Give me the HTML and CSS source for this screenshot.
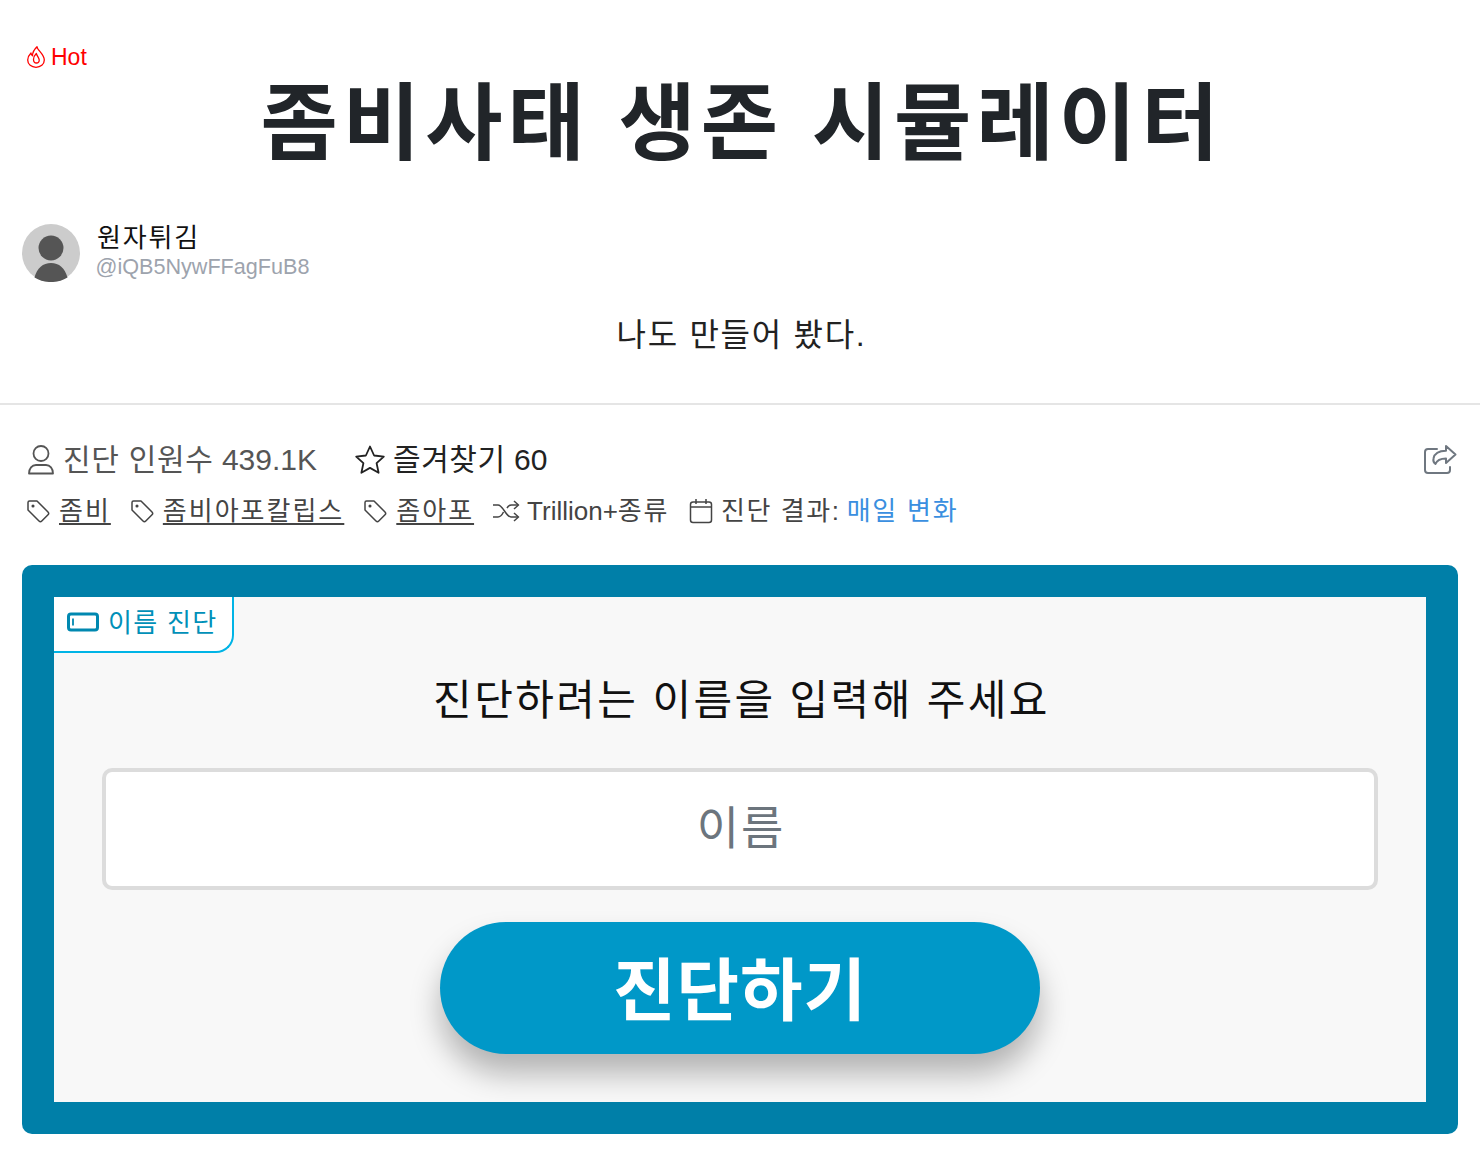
FILE: index.html
```html
<!DOCTYPE html>
<html lang="ko">
<head>
<meta charset="utf-8">
<title>좀비사태 생존 시뮬레이터</title>
<link rel="stylesheet" href="styles.css">
</head>
<body>
<header class="head">
  <div class="hot">
    <svg class="hot-icon" viewBox="0 0 18 22" fill="none" stroke="currentColor" stroke-width="1.300" stroke-linejoin="round"><path d="M10 .7C10 4 17.300 8 17.300 14c0 4.500-3.800 7.300-8.300 7.300S.7 18.500.7 14C.7 11 2.200 8.800 4 7c.2 1.400.6 2.200 1.500 2.800C5.500 6 7.500 3 10 .7z"/><path d="M9.300 7.500C7.200 9.500 6.500 11.500 6.500 13.500 6.500 15.500 7.600 17 9.500 17c1.800 0 2.900-1.500 2.700-3.200C12 11.800 10 10 9.300 7.500z"/></svg>
    <span>Hot</span>
  </div>
  <h1 class="title">좀비사태 생존 시뮬레이터</h1>
  <div class="author">
    <svg class="avatar" viewBox="0 0 58 58"><circle cx="29" cy="29" r="29" fill="#ccc"/><circle cx="29" cy="24" r="12.500" fill="#555"/><path d="M12.500 53.500C15 44 21 39 29 39s14 5 16.500 14.500A29 29 0 0 1 29 58a29 29 0 0 1-16.500-4.500z" fill="#555"/></svg>
    <div class="author-text">
      <div class="author-name">원자튀김</div>
      <div class="author-id">@iQB5NywFFagFuB8</div>
    </div>
  </div>
  <p class="desc">나도 만들어 봤다.</p>
</header>
<section class="meta">
  <div class="meta-row">
    <div class="stats">
      <span class="stat stat-people">
        <svg class="icon-lg" viewBox="0 0 28 32" fill="none" stroke="currentColor" stroke-width="1.800"><circle cx="14" cy="9.500" r="7.500"/><path d="M2 29.500c0-5 3-8.500 7-8.500h10c4 0 7 3.500 7 8.500z" stroke-linejoin="round"/></svg>
        <span><span class="ko">진단 인원수</span> 439.1K</span>
      </span>
      <span class="stat stat-fav">
        <svg class="icon-star" viewBox="0 0 32 32" fill="none" stroke="currentColor" stroke-width="1.800" stroke-linejoin="round"><path d="M16 2.500l4.100 9 9.700 1.100-7.200 6.600 2 9.600-8.600-4.900-8.600 4.900 2-9.600-7.200-6.600 9.700-1.100z"/></svg>
        <span><span class="ko">즐겨찾기</span> 60</span>
      </span>
    </div>
    <svg class="share" viewBox="0 0 34 32" fill="none" stroke="currentColor" stroke-width="2" stroke-linejoin="round" stroke-linecap="round"><path d="M14 5H5a3 3 0 0 0-3 3v18a3 3 0 0 0 3 3h19a3 3 0 0 0 3-3v-3"/><path d="M23 2l9.500 8.500L23 19v-4.500c-6 0-9 1.500-10.500 5.500-2-1.500-2.500-3.500-2-5.500C11.500 9.500 16 6.800 23 6.800z"/></svg>
  </div>
  <div class="tags">
    <a class="tag" href="#"><svg class="icon" viewBox="0 0 24 24" fill="none" stroke="currentColor" stroke-width="1.500" stroke-linejoin="round"><path d="M2 3.500A1.500 1.500 0 0 1 3.500 2h7.500l11 11a2 2 0 0 1 0 2.800L15.800 22a2 2 0 0 1-2.800 0L2 11z"/><circle cx="7" cy="7" r=".8" fill="currentColor"/></svg><span class="tag-link">좀비</span></a>
    <a class="tag" href="#"><svg class="icon" viewBox="0 0 24 24" fill="none" stroke="currentColor" stroke-width="1.500" stroke-linejoin="round"><path d="M2 3.500A1.500 1.500 0 0 1 3.500 2h7.500l11 11a2 2 0 0 1 0 2.800L15.800 22a2 2 0 0 1-2.800 0L2 11z"/><circle cx="7" cy="7" r=".8" fill="currentColor"/></svg><span class="tag-link">좀비아포칼립스</span></a>
    <a class="tag" href="#"><svg class="icon" viewBox="0 0 24 24" fill="none" stroke="currentColor" stroke-width="1.500" stroke-linejoin="round"><path d="M2 3.500A1.500 1.500 0 0 1 3.500 2h7.500l11 11a2 2 0 0 1 0 2.800L15.800 22a2 2 0 0 1-2.800 0L2 11z"/><circle cx="7" cy="7" r=".8" fill="currentColor"/></svg><span class="tag-link">좀아포</span></a>
    <span class="tag tag-shuffle"><svg class="icon-shuffle" viewBox="0 0 28 22" fill="none" stroke="currentColor" stroke-width="1.500" stroke-linejoin="round"><path d="M1 5h5c5 0 8 12 13 12h7"/><path d="M1 17h5c2.500 0 4.500-3 5.500-5M15 8c1-1.700 2.500-3 4.500-3H26"/><path d="M22 1l4.500 4-4.500 4M22 13l4.500 4-4.500 4"/></svg><span>Trillion+<span class="ko-tag">종류</span></span></span>
    <span class="tag tag-result"><svg class="icon-cal" viewBox="0 0 24 26" fill="none" stroke="currentColor" stroke-width="1.500" stroke-linejoin="round"><rect x="1.500" y="4" width="21" height="20.500" rx="2.500"/><path d="M1.500 9h21M7 1v5M17 1v5"/></svg><span class="ko-tag">진단 결과:</span><span class="accent">매일 변화</span></span>
  </div>
</section>
<main class="panel">
  <div class="panel-inner">
    <div class="badge">
      <svg class="badge-icon" viewBox="0 0 32 20" fill="none" stroke="currentColor"><rect x="1.500" y="2" width="29" height="16" rx="2.500" stroke-width="3"/><path d="M6 6.500v7" stroke-width="1.800"/></svg>
      <span class="badge-text">이름 진단</span>
    </div>
    <h2 class="prompt">진단하려는 이름을 입력해 주세요</h2>
    <input class="name-input" type="text" placeholder="이름">
    <button class="submit" type="button">진단하기</button>
  </div>
</main>
</body>
</html>
```
FILE: styles.css
```css
* { box-sizing: border-box; }
html, body { margin: 0; padding: 0; }
body {
  width: 1480px;
  height: 1172px;
  overflow: hidden;
  background: #fff;
  color: #212529;
  font-family: "Liberation Sans", "Noto Sans CJK KR", sans-serif;
}
.head {
  height: 405px;
  padding: 42px 22px 0;
  border-bottom: 2px solid #e5e5e5;
}
.hot {
  display: flex;
  align-items: center;
  gap: 6px;
  height: 30px;
  padding-left: 5px;
  color: #f00;
  font-size: 23px;
}
.hot-icon { width: 18px; height: 22px; }
.title {
  margin: 0;
  height: 122px;
  padding: 2px 0 0 4px;
  text-align: center;
  font-size: 84px;
  line-height: 100px;
  letter-spacing: 5.100px;
  font-weight: 700;
  color: #212529;
}
.author {
  display: flex;
  align-items: flex-start;
  gap: 16px;
  margin-top: 30px;
  height: 58px;
}
.avatar { width: 58px; height: 58px; flex: none; }
.author-text { display: flex; flex-direction: column; }
.author-name { font-size: 26px; line-height: 29px; padding-left: 1px; color: #111; letter-spacing: 1.800px; }
.author-id { font-size: 21.600px; line-height: 27px; margin-left: -.5px; color: #9da3ad; }
.desc {
  margin: 30px 0 0;
  padding-left: 3px;
  text-align: center;
  font-size: 32px;
  line-height: 46px;
  letter-spacing: 1.700px;
  color: #222;
}
.meta { padding: 35px 22px 0; color: #444; }
.meta-row { display: flex; justify-content: space-between; align-items: center; height: 40px; }
.stats { display: flex; gap: 37px; align-items: center; }
.stat { display: flex; align-items: center; gap: 8px; font-size: 30px; line-height: 40px; }
.stat-people { color: #555; }
.stat-fav { color: #222; gap: 7px; }
.ko { letter-spacing: .7px; }
.stat-fav .ko { letter-spacing: .6px; }
.icon-lg { width: 28px; height: 32px; margin-left: 5px; }
.icon-star { width: 32px; height: 32px; }
.share { width: 34px; height: 32px; margin-right: 1px; color: #6f7780; }
.tags { display: flex; align-items: center; gap: 15px; margin-top: 11px; height: 40px; font-size: 26px; color: #444; }
.tag { display: flex; align-items: center; gap: 9px; color: #444; text-decoration: none; line-height: 36px; }
.tag-link { text-decoration: underline; text-underline-offset: 3px; letter-spacing: 2px; }
.ko-tag { letter-spacing: 1.600px; }
.icon { width: 24px; height: 24px; margin-left: 4px; flex: none; }
.icon-shuffle { width: 28px; height: 22px; flex: none; }
.icon-cal { width: 24px; height: 26px; flex: none; }
.tag-shuffle { gap: 7px; margin-left: 3px; }
.tag-result { margin-left: 5px; gap: 8px; }
.tag-result .ko-tag { margin-right: -2px; }
.accent { color: #3a8fe0; letter-spacing: 1.800px; }
.panel {
  margin: 34px 22px 0;
  height: 569px;
  padding: 32px;
  background: #007fa8;
  border-radius: 10px;
}
.panel-inner {
  position: relative;
  height: 505px;
  background: #f8f8f8;
  display: flex;
  flex-direction: column;
  align-items: center;
  padding: 0 48px;
}
.badge {
  position: absolute;
  left: 0;
  top: 0;
  display: flex;
  align-items: center;
  gap: 9px;
  width: 180px;
  height: 56px;
  padding: 0 0 7px 13px;
  background: #fff;
  border: solid #00b4e6;
  border-width: 0 2px 2px 0;
  border-bottom-right-radius: 18px;
  color: #0090b8;
  font-size: 26px;
}
.badge-text { letter-spacing: 1.300px; }
.badge-icon { width: 32px; height: 20px; color: #0088b0; margin-top: 3px; }
.prompt {
  margin: 72px 0 0;
  padding-left: 3px;
  font-size: 42px;
  line-height: 64px;
  font-weight: 400;
  letter-spacing: 2.400px;
  color: #111;
}
.name-input {
  display: block;
  flex: none;
  width: 100%;
  height: 122px;
  margin-top: 35px;
  padding: 0 0 2px 2px;
  border: 4px solid #dcdcdc;
  border-radius: 10px;
  background: #fff;
  text-align: center;
  font-family: inherit;
  font-size: 46px;
  letter-spacing: 2px;
  color: #333;
  outline: none;
}
.name-input::placeholder { color: #6c757d; opacity: 1; }
.submit {
  flex: none;
  width: 600px;
  height: 132px;
  margin-top: 32px;
  padding: 0 0 6px;
  border: 0;
  border-radius: 66px;
  background: #0098c8;
  color: #fff;
  font-family: inherit;
  font-size: 68px;
  font-weight: 700;
  letter-spacing: 1px;
  box-shadow: 0 20px 30px rgba(0, 0, 0, .28);
}
```
